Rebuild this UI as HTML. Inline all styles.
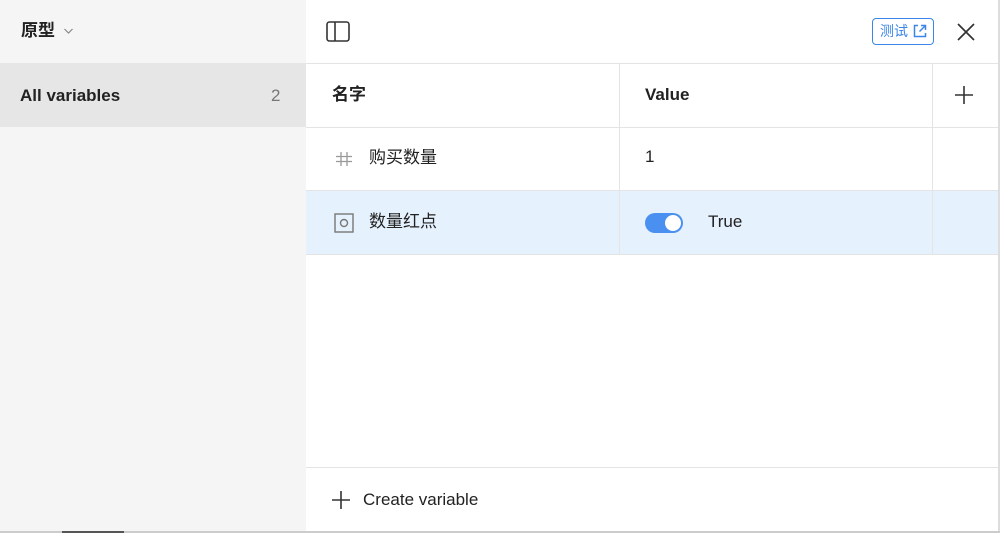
<!DOCTYPE html>
<html><head><meta charset="utf-8"><style>
*{margin:0;padding:0;box-sizing:border-box}
body{width:1000px;height:533px;overflow:hidden;background:#fff;font-family:"Liberation Sans","Noto Sans CJK SC",sans-serif;color:#222;position:relative}
.side{position:absolute;left:0;top:0;width:306px;height:533px;background:#f5f5f5}
.abs{position:absolute}
.t{position:absolute;line-height:20px;height:20px;font-size:17px;white-space:nowrap}
.hl{position:absolute;background:#e4e4e4}
</style></head><body>
<div class="side"></div>
<div class="t" style="left:21px;top:21px;font-weight:bold">原型</div>
<svg class="abs" style="left:63px;top:27px" width="11" height="8"><path d="M1.5 2l4 4 4-4" stroke="#888" stroke-width="1.2" fill="none"/></svg>
<div class="abs" style="left:0;top:63px;width:306px;height:64px;background:#e6e6e6"></div>
<div class="t" style="left:20px;top:86px;font-weight:bold">All variables</div>
<div class="t" style="left:271px;top:86px;color:#777">2</div>
<svg class="abs" style="left:326px;top:21px" width="24" height="21"><rect x="1" y="1" width="22" height="19" rx="2.5" fill="none" stroke="#333" stroke-width="1.6"/><line x1="9" y1="1" x2="9" y2="20" stroke="#333" stroke-width="1.6"/></svg>
<div class="abs" style="left:872px;top:18px;width:62px;height:27px;border:1.5px solid #3b86e8;border-radius:4px"></div>
<div class="t" style="left:880px;top:21px;font-size:14px;color:#3b86e8">测试</div>
<svg class="abs" style="left:913px;top:24px" width="14" height="14"><path d="M5 1.5H1.5v11h11V9M8 1.5h4.5V6M12.5 1.5L6.5 7.5" stroke="#3b86e8" stroke-width="1.5" fill="none"/></svg>
<svg class="abs" style="left:956px;top:22px" width="20" height="20"><path d="M2 2l16 16M18 2L2 18" stroke="#333" stroke-width="1.7"/></svg>
<div class="hl" style="left:306px;top:63px;width:694px;height:1px"></div>
<div class="abs" style="left:306px;top:191px;width:692px;height:63px;background:#e5f2fd"></div>
<div class="hl" style="left:306px;top:127px;width:692px;height:1px"></div>
<div class="hl" style="left:306px;top:190px;width:692px;height:1px"></div>
<div class="hl" style="left:306px;top:254px;width:692px;height:1px"></div>
<div class="hl" style="left:306px;top:467px;width:692px;height:1px"></div>
<div class="hl" style="left:619px;top:63px;width:1px;height:191px"></div>
<div class="hl" style="left:932px;top:63px;width:1px;height:191px"></div>
<div class="hl" style="left:998px;top:0;width:2px;height:533px;background:#ddd"></div>
<div class="hl" style="left:0;top:531px;width:1000px;height:2px;background:#ccc"></div>
<div class="hl" style="left:62px;top:531px;width:62px;height:2px;background:#555"></div>
<div class="t" style="left:332px;top:85px;font-weight:bold">名字</div>
<div class="t" style="left:645px;top:85px;font-weight:bold">Value</div>
<svg class="abs" style="left:955px;top:86px" width="18" height="18"><path d="M9 0v18M0 9h18" stroke="#333" stroke-width="1.6"/></svg>
<svg class="abs" style="left:335px;top:151px" width="18" height="16"><path d="M6 1v14M12 1v14M1 5.5h16M1 10.5h16" stroke="#999" stroke-width="1.3"/></svg>
<div class="t" style="left:369px;top:148px">购买数量</div>
<div class="t" style="left:645px;top:147px">1</div>
<svg class="abs" style="left:334px;top:213px" width="20" height="20"><rect x="1" y="1" width="18" height="18" fill="none" stroke="#777" stroke-width="1.4"/><circle cx="10" cy="10" r="3.5" fill="none" stroke="#777" stroke-width="1.4"/></svg>
<div class="t" style="left:369px;top:212px">数量红点</div>
<div class="abs" style="left:645px;top:213px;width:38px;height:20px;border-radius:10px;background:#4a90f0"></div>
<div class="abs" style="left:665px;top:215px;width:16px;height:16px;border-radius:50%;background:#fff"></div>
<div class="t" style="left:708px;top:212px">True</div>
<svg class="abs" style="left:332px;top:491px" width="18" height="18"><path d="M9 0v18M0 9h18" stroke="#333" stroke-width="1.6"/></svg>
<div class="t" style="left:363px;top:490px">Create variable</div>
</body></html>
